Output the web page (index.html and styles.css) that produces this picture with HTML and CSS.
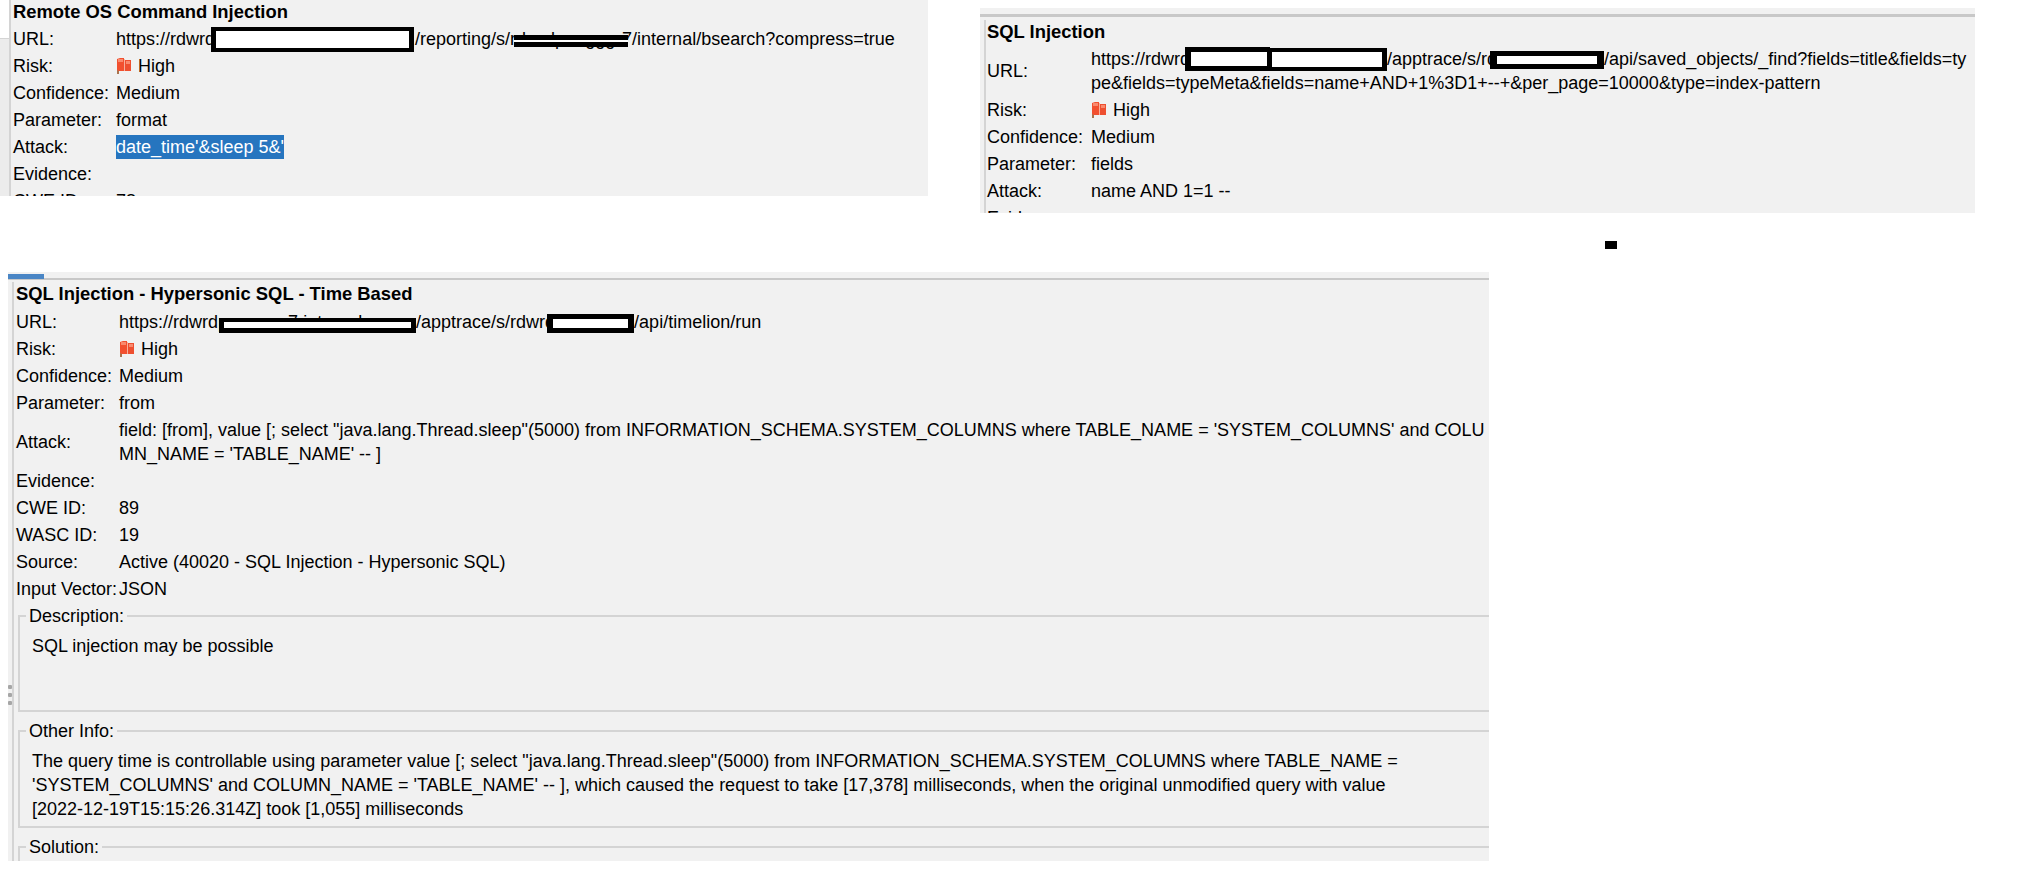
FILE: index.html
```html
<!DOCTYPE html>
<html lang="en">
<head>
<meta charset="utf-8">
<title>Alerts</title>
<link rel="stylesheet" href="styles.css">
</head>
<body>
<svg class="defs" width="0" height="0">
  <symbol id="flag" viewBox="0 0 16 16">
    <path d="M1 12h2v4H1z" fill="#a9744f"/>
    <path d="M1 1l3-1h4v13H3l-2-1z" fill="#f2502f"/>
    <path d="M9 2h6v11H9z" fill="#ee4f30"/>
    <path d="M2 1h5v3H2zM10 3h4v3h-4z" fill="#f98a6e"/>
    <path d="M8 1h1v12H8z" fill="#f7b09c"/>
  </symbol>
</svg>

<div class="side"></div>

<section class="win win-a">
  <div class="title">Remote OS Command Injection</div>
  <div class="row"><span class="lbl">URL:</span><span class="val">https://rdwrd<span class="gap a1">penggge7.internal.com<span class="bar a1b"></span></span>/reporting/s/r<span class="gap a2">dwrdpenggge<span class="bar a2b"></span></span>7/internal/bsearch?compress=true</span></div>
  <div class="row"><span class="lbl">Risk:</span><span class="val"><svg class="flag"><use href="#flag"/></svg>High</span></div>
  <div class="row"><span class="lbl">Confidence:</span><span class="val">Medium</span></div>
  <div class="row"><span class="lbl">Parameter:</span><span class="val">format</span></div>
  <div class="row"><span class="lbl">Attack:</span><span class="val"><span class="sel">date_time'&amp;sleep 5&amp;'</span></span></div>
  <div class="row"><span class="lbl">Evidence:</span><span class="val"></span></div>
  <div class="row"><span class="lbl">CWE ID:</span><span class="val">78</span></div>
</section>

<section class="win win-b">
  <div class="strip"></div>
  <div class="body">
    <div class="inner">
      <div class="title">SQL Injection</div>
      <div class="row tall"><span class="lbl">URL:</span><span class="val">https://rdwrd<span class="gap b1">penggge7.internal<span class="bar b1b"></span><span class="bar b2b"></span></span>/apptrace/s/r<span class="gap b3">dwrdpengg<span class="bar b3b"></span></span>/api/saved_objects/_find?fields=title&amp;fields=ty<br>pe&amp;fields=typeMeta&amp;fields=name+AND+1%3D1+--+&amp;per_page=10000&amp;type=index-pattern</span></div>
      <div class="row"><span class="lbl">Risk:</span><span class="val"><svg class="flag"><use href="#flag"/></svg>High</span></div>
      <div class="row"><span class="lbl">Confidence:</span><span class="val">Medium</span></div>
      <div class="row"><span class="lbl">Parameter:</span><span class="val">fields</span></div>
      <div class="row"><span class="lbl">Attack:</span><span class="val">name AND 1=1 --</span></div>
      <div class="row"><span class="lbl">Evidence:</span><span class="val"></span></div>
    </div>
  </div>
</section>

<div class="speck"></div>

<section class="win win-c">
  <div class="strip"><div class="tab"></div></div>
  <div class="body">
    <div class="inner">
      <div class="title">SQL Injection - Hypersonic SQL - Time Based</div>
      <div class="row"><span class="lbl">URL:</span><span class="val">https://rdwrd<span class="gap c1">penggge7.internal.com<span class="bar c1b"></span></span>/apptrace/s/rdwr<span class="gap c2">dpenggg<span class="bar c2b"></span></span>/api/timelion/run</span></div>
      <div class="row"><span class="lbl">Risk:</span><span class="val"><svg class="flag"><use href="#flag"/></svg>High</span></div>
      <div class="row"><span class="lbl">Confidence:</span><span class="val">Medium</span></div>
      <div class="row"><span class="lbl">Parameter:</span><span class="val">from</span></div>
      <div class="row tall"><span class="lbl">Attack:</span><span class="val">field: [from], value [; select "java.lang.Thread.sleep"(5000) from INFORMATION_SCHEMA.SYSTEM_COLUMNS where TABLE_NAME = 'SYSTEM_COLUMNS' and COLU<br>MN_NAME = 'TABLE_NAME' -- ]</span></div>
      <div class="row"><span class="lbl">Evidence:</span><span class="val"></span></div>
      <div class="row"><span class="lbl">CWE ID:</span><span class="val">89</span></div>
      <div class="row"><span class="lbl">WASC ID:</span><span class="val">19</span></div>
      <div class="row"><span class="lbl">Source:</span><span class="val">Active (40020 - SQL Injection - Hypersonic SQL)</span></div>
      <div class="row"><span class="lbl">Input Vector:</span><span class="val">JSON</span></div>
      <fieldset class="box box-desc">
        <legend>Description:</legend>
        <p>SQL injection may be possible</p>
      </fieldset>
      <fieldset class="box box-info">
        <legend>Other Info:</legend>
        <p>The query time is controllable using parameter value [; select "java.lang.Thread.sleep"(5000) from INFORMATION_SCHEMA.SYSTEM_COLUMNS where TABLE_NAME =<br>'SYSTEM_COLUMNS' and COLUMN_NAME = 'TABLE_NAME' -- ], which caused the request to take [17,378] milliseconds, when the original unmodified query with value<br>[2022-12-19T15:15:26.314Z] took [1,055] milliseconds</p>
      </fieldset>
      <fieldset class="box box-sol">
        <legend>Solution:</legend>
      </fieldset>
    </div>
  </div>
  <div class="grip"><i></i><i></i><i></i></div>
</section>
</body>
</html>
```
FILE: styles.css
```css
* { box-sizing: border-box; }
html, body { margin: 0; padding: 0; background: #fff; }
body {
  width: 2022px;
  height: 874px;
  position: relative;
  overflow: hidden;
  font-family: "Liberation Sans", Arial, sans-serif;
  font-size: 18px;
  line-height: 24px;
  color: #000;
}
.defs { position: absolute; }

/* pasted screenshots on a free canvas */
.win { position: absolute; overflow: hidden; background: #f1f1f1; }
.win-a { left: 9px; top: 0; width: 919px; height: 196px; border-left: 2px solid #d4d4d4; padding-left: 2px; }
.win-b { left: 980px; top: 8px; width: 995px; height: 205px; }
.win-c { left: 8px; top: 272px; width: 1481px; height: 589px; }
.side { position: absolute; left: 0; top: 38px; width: 9px; height: 158px; background: #ececec; border-top: 1px solid #d4d4d4; }
.speck { position: absolute; left: 1605px; top: 241px; width: 12px; height: 8px; background: #000; }

.strip { height: 6px; }
.body { border-top: 3px solid #c8c8c8; }
.inner { border-left: 2px solid #d4d4d4; }

.win-a .title { height: 25px; }

.win-b .inner { margin-left: 4px; padding-left: 1px; }
.win-b .title { margin-top: 3px; height: 26px; }
.win-b .lbl { width: 104px; }
.win-b .row.tall { height: 50px; }

.tab { position: relative; top: 2px; width: 36px; height: 5px; background: #4a86c5; }
.win-c .body { border-top-width: 2px; }
.win-c .inner { margin-left: 4px; padding-left: 2px; }
.win-c .title { margin-top: 2px; height: 26px; }

.title { font-size: 18.4px; font-weight: 700; height: 26px; white-space: nowrap; }
.row { display: flex; align-items: center; height: 27px; white-space: nowrap; }
.row.tall { height: 51px; }
.lbl { flex: none; width: 103px; }
.val { flex: none; }

.sel { display: inline-block; background: #2675bf; color: #fff; }
.flag { width: 16px; height: 16px; vertical-align: -2px; margin-right: 6px; }

/* redaction marks drawn over the picture */
.gap { display: inline-block; position: relative; white-space: nowrap; }
.bar { position: absolute; display: block; background: #fff; border: 5px solid #000; }
.a1 { width: 200px; }
.a1b { left: -4px; top: 0; width: 203px; height: 25px; border-width: 4px 5px; }
.a2 { width: 106px; }
.a2b { left: -2px; top: 8px; width: 114px; height: 12px; border-width: 5px 0; }
.b1 { width: 197px; }
.b1b { left: -5px; top: 0; width: 85px; height: 24px; border-width: 5px 3px 5px 6px; }
.b2b { left: 77px; top: 1px; width: 120px; height: 23px; border-width: 4px 5px; }
.b3 { width: 117px; }
.b3b { left: 3px; top: 4px; width: 114px; height: 18px; border-width: 5px 7px; }
.c1 { width: 198px; }
.c1b { left: 1px; top: 8px; width: 197px; height: 15px; border-width: 4px 5px 5px; }
.c2 { width: 89px; }
.c2b { left: 2px; top: 4px; width: 87px; height: 19px; border-width: 5px 6px; }

/* grouped text areas */
.box { margin: 7px 0 0 2px; padding: 0; width: 1500px; border: 2px solid #d4d4d4; min-width: 0; }
.box legend { margin-left: 6px; padding: 0 3px; }
.box p { margin: 6px 0 0 12px; white-space: nowrap; }
.box-desc { margin-top: 2px; height: 108px; }
.box-info { height: 109px; }
.box-sol { height: 60px; }

.grip { position: absolute; left: 0; top: 413px; display: flex; flex-direction: column; gap: 4px; }
.grip i { display: block; width: 4px; height: 4px; border-radius: 1px; background: #a6a6a6; }
```
